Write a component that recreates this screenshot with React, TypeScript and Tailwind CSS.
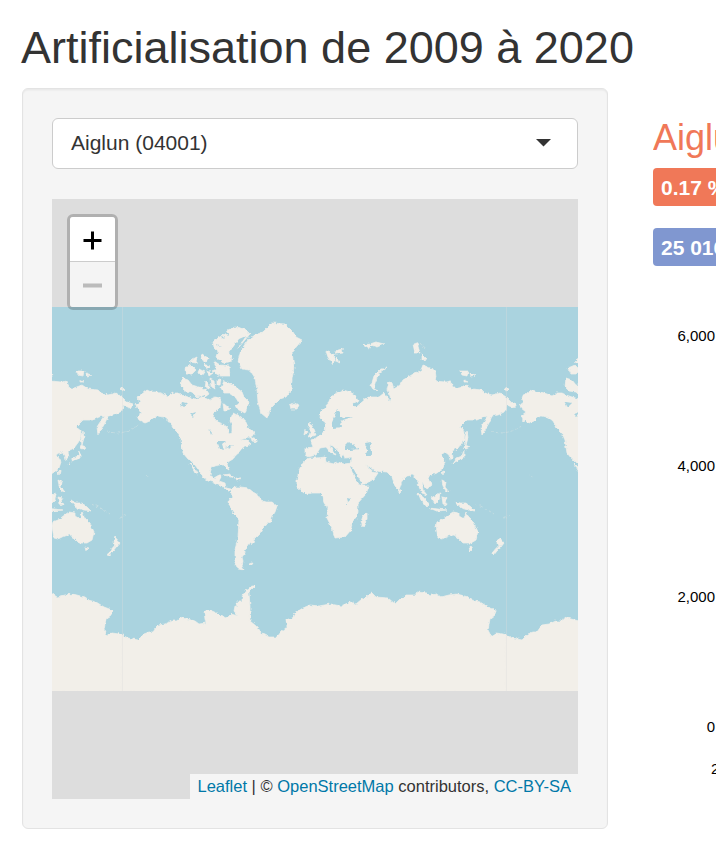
import React from "react";

const LAND = [
  // North and Central America
  "M136 405L140 402L137 397L142 394L147 390L151 392L157 392L163 394L168 396L173 393L178 393L182 395L188 397L195 399L203 397L209 400L215 397L220 398L221 402L220 407L215 411L213 417L218 422L223 424L227 427L229 434L232 433L232 425L230 421L233 413L237 415L241 418L245 420L248 427L253 431L255 435L249 437L240 440L247 440L251 444L248 446L242 448L239 452L235 455L233 459L228 462L227 465L229 470L226 468L225 465L219 465L215 466L211 468L210 475L214 478L219 475L222 475L219 481L225 483L226 488L231 489L233 491L228 491L224 487L218 485L213 482L208 481L203 477L200 472L195 465L191 461L188 459L183 453L182 447L181 440L178 433L173 428L169 421L164 417L157 416L153 418L150 421L145 423L139 420L137 416L142 412L137 408Z",
  // South America
  "M231 490L235 487L241 487L248 488L253 492L258 495L261 500L266 502L272 502L277 506L275 512L272 517L271 522L266 524L263 527L260 533L254 539L253 543L248 544L247 548L245 550L245 553L242 557L243 561L242 566L244 570L238 569L235 563L235 550L238 537L239 519L233 513L231 507L228 503L230 499L232 496Z",
  // Greenland and Ellesmere
  "M241 350L238 361L242 369L250 370L255 378L257 390L258 402L261 413L267 418L271 408L280 399L286 397L291 390L292 379L294 367L292 352L297 346L302 340L296 337L293 332L285 324L272 323L263 332L255 335L248 340Z",
  "M250 334L245 329L235 327L228 330L223 335L218 338L213 342L214 347L218 351L216 357L223 363L232 361L234 355L233 351L239 347Z",
  // Eurasia joined to Africa at Sinai
  "M320 418L321 411L327 406L330 399L334 394L343 390L350 392L355 395L358 401L352 404L356 408L360 405L363 400L370 397L379 397L384 393L388 398L391 402L390 396L387 390L389 382L392 383L394 389L400 385L403 380L410 376L415 373L421 370L423 365L430 368L435 370L436 377L435 381L445 382L451 381L453 388L458 388L466 385L472 389L482 390L485 393L492 395L500 393L506 397L511 402L517 404L514 408L507 405L506 411L498 415L492 416L489 423L482 435L481 427L486 419L488 416L483 417L477 420L467 420L460 427L465 431L464 440L458 448L452 451L453 458L450 460L449 455L445 452L441 455L445 462L443 468L437 473L429 476L428 479L432 485L427 489L424 485L422 481L423 490L427 495L422 493L419 487L418 482L413 475L407 476L402 481L399 490L395 486L392 477L387 472L375 471L366 464L372 472L378 473L374 479L361 486L356 476L351 467L352 457L345 458L343 454L341 457L338 451L333 446L329 445L333 450L336 455L331 453L326 447L320 448L316 455L308 457L305 455L305 448L313 447L311 440L316 438L325 431L326 423Z",
  "M305 460L310 458L317 458L325 457L326 462L334 464L338 462L344 464L352 463L353 472L358 482L361 486L369 486L366 494L358 503L358 512L357 517L352 523L351 530L345 537L335 538L332 528L327 518L328 508L324 503L323 496L320 493L312 493L305 494L297 487L297 478L300 468Z",
  // Madagascar, Britain, Ireland, Iceland, Japan, Novaya Zemlya
  "M367 513L367 519L363 527L361 522L363 516Z",
  "M310 422L314 430L316 435L308 437L311 431L308 427Z",
  "M305 429L308 432L304 435Z",
  "M290 405L294 403L299 405L297 409L291 409Z",
  "M387 367L379 373L375 383L374 389L378 391L373 389L371 386L374 376L380 370Z",
  "M464 450L464 458L459 460L455 462L453 464L457 458L462 456Z",
  "M465 445L470 447L466 449L464 448Z",
  "M467 431L468 438L466 445L465 438Z",
  // Svalbard, Franz Josef and Severnaya Zemlya
  "M326 351L335 355L333 365L328 357Z",
  "M335 351L342 349L343 353L336 354Z",
  "M336 358L340 363L336 361Z",
  "M363 345L370 344L376 342L384 344L377 347L371 345L369 349Z",
  "M413 344L417 343L420 353L415 353Z",
  "M422 354L427 359L422 360Z",
  "M460 371L468 371L467 376L462 375Z",
  "M470 373L475 375L471 376Z",
  "M464 380L468 382L464 382Z",
  "M505 388L509 389L506 391Z",
  // South-east Asia and Pacific islands
  "M418 493L424 498L429 505L427 507L421 500Z",
  "M429 508L438 509L447 510L437 511Z",
  "M431 498L440 493L439 500L435 504Z",
  "M442 497L447 498L445 501L447 505L443 504Z",
  "M442 480L446 482L445 487L449 492L446 491L443 486Z",
  "M455 501L460 503L466 503L471 507L475 511L468 510L461 508Z",
  "M398 491L401 490L400 494Z",
  "M442 472L444 471L443 475Z",
  // Australia, Tasmania, New Zealand
  "M436 526L437 522L442 520L446 517L450 514L453 512L459 513L459 516L464 519L466 512L469 518L474 523L478 532L476 540L471 543L463 543L459 539L454 535L448 536L442 539L438 538Z",
  "M469 547L473 548L470 551Z",
  "M499 537L504 543L501 547L497 543Z",
  "M500 544L501 546L493 556L492 553Z",
  // Canadian archipelago, Newfoundland, Caribbean
  "M182 378L188 380L192 385L202 388L204 395L197 397L192 392L185 391L181 387Z",
  "M224 381L233 385L242 392L244 397L249 402L247 407L245 413L237 409L235 405L239 403L236 398L229 393L224 393L221 388Z",
  "M210 379L214 381L215 389L211 386Z",
  "M206 381L209 384L209 389L205 387Z",
  "M217 380L221 379L220 385L217 385Z",
  "M202 390L206 389L209 394L205 397Z",
  "M184 368L191 365L196 370L192 374L187 374Z",
  "M202 354L208 358L206 362L201 359Z",
  "M193 359L197 357L196 363L190 362Z",
  "M204 364L210 366L206 369Z",
  "M199 369L205 372L202 376L198 373Z",
  "M214 361L220 365L229 366L230 376L220 376L212 371L217 369Z",
  "M207 371L213 373L209 376Z",
  "M223 403L230 409L224 411Z",
  "M251 437L257 439L257 442L252 441Z",
  "M223 475L229 474L235 478L228 476Z",
  "M235 478L241 478L237 480Z",
  "M190 463L194 467L198 474L195 472Z",
  "M249 564L253 563L251 566Z",
  // Antarctica
  "M122 635L128 638L138 640L144 634L149 632L153 632L158 625L165 624L172 621L178 621L180 617L187 619L195 621L199 624L206 623L205 619L204 611L212 611L221 615L227 618L231 614L238 616L234 611L235 606L238 607L237 602L242 602L242 597L246 590L252 586L255 586L249 592L250 607L250 621L256 626L263 634L269 637L277 637L281 632L287 627L286 619L292 619L295 613L303 608L310 605L319 606L330 604L341 606L350 602L356 604L362 599L372 593L376 597L388 598L395 604L400 599L406 595L415 595L417 592L427 593L430 596L435 593L441 597L449 595L457 594L468 597L472 600L480 602L488 607L496 610L495 615L490 619L488 630L491 636L496 633L503 634L508 636V692H122Z",
].join("");

const WATER = [
  "M337 409L335 415L331 425L333 428L342 427L340 421L352 417L347 417L340 418L340 412Z",
  "M345 446L349 442L353 445L355 443L354 446L359 449L351 450L345 450Z",
  "M365 443L371 442L370 446L372 456L366 456L367 450Z",
  "M350 466L353 468L362 484L360 485L355 478Z",
  "M347 498L351 499L348 502Z",
  "M346 503L347 505L346 506Z",
  "M182 402L188 403L184 407L181 405Z",
  "M190 414L196 412L193 417Z",
  "M209 429L212 433L211 435Z",
  "M217 441L226 441L222 444L224 450L220 449Z",
  "M225 447L233 445L229 449Z",
  "M229 353L239 339L246 336L237 349L234 361Z",
  "M221 335L225 339L222 338Z",
  "M216 344L222 347L217 346Z",
  "M225 330L229 335L226 334Z",
].join("");

function World({ offset }: { offset: number }) {
  return (
    <g transform={`translate(${offset} 0)`}>
      <path d={LAND} fill="#f2efe9" stroke="#f2efe9" strokeWidth="0.7" strokeLinejoin="round" />
      <path d={WATER} fill="#aad3df" />
      <g fill="none" stroke="#c9dee2" strokeWidth="0.8" strokeDasharray="3 2">
        <path d="M491 431Q507 437 524 424" />
        <path d="M475 504L483 507L494 514M503 518L510 515M530 475L534 478M420 343L425 349" />
      </g>
    </g>
  );
}

function WorldMap() {
  return (
    <svg className="block h-full w-full" viewBox="52 199 526 600">
      <defs>
        <clipPath id="tiles">
          <rect x="52" y="307" width="526" height="384" />
        </clipPath>
        <filter id="coast" filterUnits="userSpaceOnUse" x="30" y="290" width="570" height="420" colorInterpolationFilters="sRGB">
          <feTurbulence type="fractalNoise" baseFrequency="0.3" numOctaves="2" seed="4" result="noise" />
          <feDisplacementMap in="SourceGraphic" in2="noise" scale="3.5" xChannelSelector="R" yChannelSelector="G" />
          <feGaussianBlur stdDeviation="0.75" />
        </filter>
      </defs>
      <g clipPath="url(#tiles)">
        <rect x="52" y="307" width="526" height="384" fill="#aad3df" />
        <g filter="url(#coast)">
          <World offset={-384} />
          <World offset={0} />
          <World offset={384} />
        </g>
        <path d="M122.5 307V691M506.5 307V691" stroke="#dddddd" strokeOpacity="0.35" />
      </g>
    </svg>
  );
}

function ZoomControl() {
  return (
    <div className="absolute top-[15px] left-[15px] w-[51px] rounded-[6px] border-[3px] border-black/20 bg-clip-padding">
      <div className="flex h-[45px] items-center justify-center rounded-t-[3px] border-b border-[#ccc] bg-white pt-[2px]">
        <svg width="19" height="19" viewBox="0 0 19 19">
          <path d="M0.5 9.5H18.5M9.5 0.5V18.5" stroke="#000" strokeWidth="3" />
        </svg>
      </div>
      <div className="flex h-[45px] items-center justify-center rounded-b-[3px] bg-[#f4f4f4] pt-[2px]">
        <svg width="19" height="5" viewBox="0 0 19 5">
          <path d="M0 2.5H19" stroke="#bbb" strokeWidth="4" />
        </svg>
      </div>
    </div>
  );
}

export default function App() {
  return (
    <div className="h-[843px] w-[716px] overflow-hidden bg-white px-[22px] pt-[23px] font-['Liberation_Sans',Arial,sans-serif] text-[21px] leading-[30px] text-[#333]">
      <h2 className="-ml-px text-[45px] leading-[50px] whitespace-nowrap">Artificialisation de 2009 à 2020</h2>
      <div className="mt-[15px] flex w-[694px]">
        <section className="h-[741px] w-[586px] shrink-0 rounded-[6px] border border-[#e3e3e3] bg-[#f5f5f5] p-[29px] shadow-[inset_0_1.5px_1.5px_rgba(0,0,0,0.05)]">
          <div className="flex h-[51px] items-center justify-between rounded-[6px] border border-[#ccc] bg-white pr-[26px] pl-[18px]">
            <span className="pb-[2px]">Aiglun (04001)</span>
            <svg className="mb-px" width="15" height="8" viewBox="0 0 15 8">
              <path d="M0 0H15L7.5 7.5Z" fill="#333" />
            </svg>
          </div>
          <div className="relative mt-[30px] h-[600px] bg-[#ddd]">
            <WorldMap />
            <ZoomControl />
            <div className="absolute right-0 bottom-0 flex h-[25px] w-[388px] items-center justify-end bg-[#f5f5f5] pr-[7px] text-[16.5px] leading-[25px] whitespace-pre">
              <span className="text-[#0078a8]">Leaflet</span> | © <span className="text-[#0078a8]">OpenStreetMap</span> contributors, <span className="text-[#0078a8]">CC-BY-SA</span>
            </div>
          </div>
        </section>
        <section className="ml-[45px] flex w-[63px] shrink-0 flex-col overflow-hidden whitespace-nowrap">
          <h3 className="mt-[30px] text-[36px] leading-[40px] text-[#f07858]">Aiglun</h3>
          <div className="mt-[10px] h-[38px] w-[120px] rounded-[4px] bg-[#f07858] px-2 leading-[40px] font-bold text-white">0.17 %</div>
          <div className="mt-[22px] h-[38px] w-[120px] rounded-[4px] bg-[#8097d0] px-2 leading-[40px] font-bold text-white">25 016</div>
          <div className="mt-[60px] flex h-[411px] w-[62px] flex-col justify-between text-right text-[15px] leading-5 text-black">
            <span>6,000</span>
            <span>4,000</span>
            <span>2,000</span>
            <span>0</span>
          </div>
          <div className="mt-[22px] pl-[58px] text-[15px] leading-5 text-black">2010</div>
        </section>
      </div>
    </div>
  );
}
